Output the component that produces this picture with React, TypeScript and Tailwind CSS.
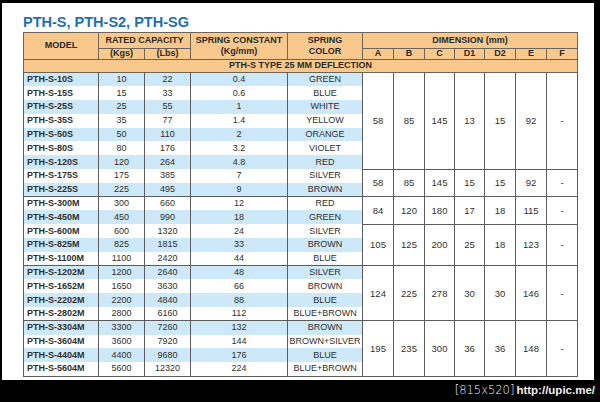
const ROWS = [
  ['PTH-S-10S', '10', '22', '0.4', 'GREEN'],
  ['PTH-S-15S', '15', '33', '0.6', 'BLUE'],
  ['PTH-S-25S', '25', '55', '1', 'WHITE'],
  ['PTH-S-35S', '35', '77', '1.4', 'YELLOW'],
  ['PTH-S-50S', '50', '110', '2', 'ORANGE'],
  ['PTH-S-80S', '80', '176', '3.2', 'VIOLET'],
  ['PTH-S-120S', '120', '264', '4.8', 'RED'],
  ['PTH-S-175S', '175', '385', '7', 'SILVER'],
  ['PTH-S-225S', '225', '495', '9', 'BROWN'],
  ['PTH-S-300M', '300', '660', '12', 'RED'],
  ['PTH-S-450M', '450', '990', '18', 'GREEN'],
  ['PTH-S-600M', '600', '1320', '24', 'SILVER'],
  ['PTH-S-825M', '825', '1815', '33', 'BROWN'],
  ['PTH-S-1100M', '1100', '2420', '44', 'BLUE'],
  ['PTH-S-1202M', '1200', '2640', '48', 'SILVER'],
  ['PTH-S-1652M', '1650', '3630', '66', 'BROWN'],
  ['PTH-S-2202M', '2200', '4840', '88', 'BLUE'],
  ['PTH-S-2802M', '2800', '6160', '112', 'BLUE+BROWN'],
  ['PTH-S-3304M', '3300', '7260', '132', 'BROWN'],
  ['PTH-S-3604M', '3600', '7920', '144', 'BROWN+SILVER'],
  ['PTH-S-4404M', '4400', '9680', '176', 'BLUE'],
  ['PTH-S-5604M', '5600', '12320', '224', 'BLUE+BROWN'],
]

// dimension blocks: first row index, row span, A B C D1 D2 E F
const DIMS: { start: number; span: number; vals: string[] }[] = [
  { start: 0, span: 7, vals: ['58', '85', '145', '13', '15', '92', '-'] },
  { start: 7, span: 2, vals: ['58', '85', '145', '15', '15', '92', '-'] },
  { start: 9, span: 2, vals: ['84', '120', '180', '17', '18', '115', '-'] },
  { start: 11, span: 3, vals: ['105', '125', '200', '25', '18', '123', '-'] },
  { start: 14, span: 4, vals: ['124', '225', '278', '30', '30', '146', '-'] },
  { start: 18, span: 4, vals: ['195', '235', '300', '36', '36', '148', '-'] },
]

// rows where the left columns get a rule above them
const GROUP_TOPS = [9, 14, 18]

const hd = 'border border-[#6f6456] p-0 text-center font-bold text-[#2a2a2a]'

export default function App() {
  return (
    <div className="h-[402px] w-[600px] overflow-hidden bg-black font-['Liberation_Sans',Arial,sans-serif]">
      <div className="mt-[3px] ml-[2px] h-[377px] w-[592px] bg-white pt-[11px]">
        <h1 className="ml-[21px] mb-[2px] h-[16px] text-[14.5px] leading-[16px] font-bold text-[#1f6fb4]">
          PTH-S, PTH-S2, PTH-SG
        </h1>
        <table className="ml-[21px] w-[554px] table-fixed border-collapse text-[9px] leading-none text-[#2f2f2f]">
          <colgroup>
            <col className="w-[75px]" />
            <col className="w-[46px]" />
            <col className="w-[46px]" />
            <col className="w-[97px]" />
            <col className="w-[75px]" />
            <col className="w-[31px]" />
            <col className="w-[31px]" />
            <col className="w-[30px]" />
            <col className="w-[30px]" />
            <col className="w-[31px]" />
            <col className="w-[31px]" />
            <col className="w-[31px]" />
          </colgroup>
          <thead className="bg-[#f8c88c]">
            <tr className="h-[16px]">
              <th rowSpan={2} className={hd}>
                MODEL
              </th>
              <th colSpan={2} className={hd}>
                RATED CAPACITY
              </th>
              <th rowSpan={2} className={`${hd} leading-[11px]`}>
                SPRING CONSTANT
                <br />
                (Kg/mm)
              </th>
              <th rowSpan={2} className={`${hd} leading-[11px]`}>
                SPRING
                <br />
                COLOR
              </th>
              <th colSpan={7} className={hd}>
                DIMENSION (mm)
              </th>
            </tr>
            <tr className="h-[10.5px]">
              <th className={hd}>(Kgs)</th>
              <th className={hd}>(Lbs)</th>
              {['A', 'B', 'C', 'D1', 'D2', 'E', 'F'].map((d) => (
                <th key={d} className={hd}>
                  {d}
                </th>
              ))}
            </tr>
            <tr className="h-[13.5px]">
              <th colSpan={12} className={hd}>
                PTH-S TYPE 25 MM DEFLECTION
              </th>
            </tr>
          </thead>
          <tbody>
            {ROWS.map((r, i) => {
              const stripe = i % 2 === 0 ? 'bg-[#cde8f8]' : 'bg-white'
              const top = GROUP_TOPS.includes(i) ? 'border-t' : ''
              const dim = DIMS.find((d) => d.start === i)
              return (
                <tr key={r[0]} className="h-[13.8px]">
                  <td className={`border-x border-[#5c5c5c] p-0 pl-[3px] font-bold ${stripe} ${top}`}>{r[0]}</td>
                  <td className={`border-x border-[#5c5c5c] p-0 text-center ${stripe} ${top}`}>{r[1]}</td>
                  <td className={`border-x border-[#5c5c5c] p-0 text-center ${stripe} ${top}`}>{r[2]}</td>
                  <td className={`border-x border-[#5c5c5c] p-0 text-center ${stripe} ${top}`}>{r[3]}</td>
                  <td className={`border-x border-[#5c5c5c] p-0 text-center whitespace-nowrap ${stripe} ${top}`}>
                    {r[4]}
                  </td>
                  {dim &&
                    dim.vals.map((v, k) => (
                      <td
                        key={k}
                        rowSpan={dim.span}
                        className="border border-[#5c5c5c] bg-white p-0 text-center text-[9.5px]"
                      >
                        {v}
                      </td>
                    ))}
                </tr>
              )
            })}
            <tr className="h-0">
              <td colSpan={12} className="border-t border-[#5c5c5c] p-0" />
            </tr>
          </tbody>
        </table>
      </div>
      <div className="flex h-[22px] items-center justify-end pr-[5px] text-[#f0f0f0]">
        <span className="font-['DejaVu_Sans',sans-serif] text-[11.5px] font-light">[815x520]</span>
        <span className="ml-[2px] font-['Liberation_Sans',Arial,sans-serif] text-[11.5px] font-bold">
          http://upic.me/
        </span>
      </div>
    </div>
  )
}
